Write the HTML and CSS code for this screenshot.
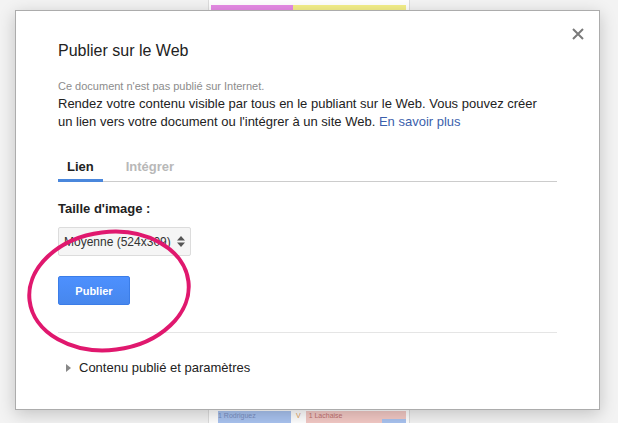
FILE: index.html
```html
<!DOCTYPE html>
<html lang="fr">
<head>
    <meta charset="UTF-8">
    <title>Publier sur le Web</title>
    <link rel="stylesheet" href="styles.css">
</head>
<body>
    <!-- Sheet visible behind the dialog -->
    <div class="page">
        <div class="sheet">
            <div class="sheet-top">
                <span class="band pink"></span>
                <span class="band yellow"></span>
            </div>
            <div class="sheet-bottom">
                <span class="cell blue">1 Rodriguez</span>
                <span class="cell mark">V</span>
                <span class="cell red">1 Lachaise <i class="chip"></i></span>
            </div>
        </div>
    </div>

    <div class="dialog">
        <svg class="close" width="12" height="12" viewBox="0 0 12 12">
            <path d="M1 1 L11 11 M11 1 L1 11" stroke="#7a7a7a" stroke-width="2" fill="none"/>
        </svg>

        <h1 class="title">Publier sur le Web</h1>
        <p class="note">Ce document n'est pas publié sur Internet.</p>
        <p class="intro">Rendez votre contenu visible par tous en le publiant sur le Web. Vous pouvez créer un lien vers votre document ou l'intégrer à un site Web. <a href="#">En savoir plus</a></p>

        <div class="tabs">
            <span class="tab active">Lien</span>
            <span class="tab">Intégrer</span>
        </div>

        <div class="label">Taille d'image :</div>
        <div class="select">
            <span>Moyenne (524x309)</span>
            <svg width="8" height="11" viewBox="0 0 8 11">
                <path d="M0 4.5 L4 0 L8 4.5 Z M0 6.5 L4 11 L8 6.5 Z" fill="#555"/>
            </svg>
        </div>

        <button class="publish">Publier</button>

        <hr class="sep">

        <div class="more">
            <svg width="5" height="8" viewBox="0 0 5 8"><path d="M0 0 L5 4 L0 8 Z" fill="#888"/></svg>
            <span>Contenu publié et paramètres</span>
        </div>

        <!-- hand drawn circle around the button -->
        <svg class="circle" width="175" height="134" viewBox="0 0 175 134">
            <ellipse cx="86" cy="67" rx="80" ry="59" transform="rotate(-7 86 67)" fill="none" stroke="#e0186e" stroke-width="4"/>
        </svg>
    </div>
</body>
</html>
```

FILE: styles.css
```css
body {
    margin: 0;
    background: #f3f3f3;
    font-family: "Liberation Sans", Arial, sans-serif;
    color: #222;
}

.page {
    height: 423px;
    display: flex;
}

.sheet {
    margin-left: 208px;
    width: 200px;
    border-left: 1px solid #ddd;
    border-right: 1px solid #ddd;
    background: #fff;
    display: flex;
    flex-direction: column;
    justify-content: space-between;
}

.sheet-top {
    display: flex;
    padding: 5px 3px 0 2px;
    height: 6px;
}

.band {
    height: 6px;
}

.pink {
    width: 82px;
    background: #e78be6;
}

.yellow {
    width: 113px;
    background: #f5f08a;
}

.sheet-bottom {
    display: flex;
    height: 12px;
    padding: 0 3px 0 2px;
    font-size: 7px;
    line-height: 10px;
    color: #7a8fc0;
}

.cell {
    height: 12px;
    overflow: hidden;
    white-space: nowrap;
}

.cell.blue {
    width: 75px;
    margin-left: 7px;
    background: #a9c3f0;
}

.cell.mark {
    width: 15px;
    text-align: center;
    color: #e0a060;
}

.cell.red {
    width: 100px;
    position: relative;
    background: #f3c9c5;
    color: #c07070;
    padding-left: 3px;
}

.chip {
    position: absolute;
    right: 0;
    top: 8px;
    width: 24px;
    height: 6px;
    background: #a9c3f0;
}

/* Dialog */
.dialog {
    position: absolute;
    left: 15px;
    top: 10px;
    width: 499px;
    height: 368px;
    padding: 30px 42px 0 42px;
    background: #fff;
    border: 1px solid #acacac;
    box-shadow: 0 4px 16px rgba(0, 0, 0, 0.2);
}

.close {
    position: absolute;
    left: 556px;
    top: 17px;
}

.title {
    margin: 0;
    font-size: 16px;
    font-weight: normal;
    line-height: 20px;
    color: #222;
}

.note {
    margin: 18px 0 0 0;
    font-size: 11px;
    line-height: 14px;
    color: #8c8c8c;
}

.intro {
    width: 488px;
    margin: 2px 0 0 0;
    font-size: 13px;
    line-height: 18px;
    color: #222;
}

.intro a {
    color: #3c5fac;
    text-decoration: none;
}

.tabs {
    display: flex;
    gap: 14px;
    margin-top: 28px;
    border-bottom: 1px solid #ccc;
}

.tab {
    padding: 0 9px 4px 9px;
    margin-bottom: -1px;
    font-size: 13px;
    font-weight: bold;
    line-height: 16px;
    color: #b8b8b8;
    border-bottom: 3px solid transparent;
}

.tab.active {
    color: #222;
    border-bottom-color: #4a87dc;
}

.label {
    margin-top: 19px;
    font-size: 13px;
    font-weight: bold;
    line-height: 16px;
}

.select {
    margin-top: 10px;
    width: 121px;
    height: 27px;
    padding: 0 5px 0 5px;
    display: flex;
    align-items: center;
    justify-content: space-between;
    background: #f5f5f5;
    border: 1px solid #dcdcdc;
    border-radius: 2px;
    font-size: 12px;
    color: #333;
}

.publish {
    display: block;
    margin-top: 20px;
    width: 72px;
    height: 29px;
    padding: 0;
    border: 1px solid #3b7de8;
    border-radius: 2px;
    background: linear-gradient(#4d90fe, #4787ed);
    color: #fff;
    font-family: "Liberation Sans", Arial, sans-serif;
    font-size: 11px;
    font-weight: bold;
}

.sep {
    margin: 27px 0 0 0;
    border: none;
    border-top: 1px solid #e5e5e5;
}

.more {
    margin-top: 27px;
    display: flex;
    align-items: center;
    gap: 8px;
    padding-left: 8px;
    font-size: 13px;
    line-height: 16px;
}

.circle {
    position: absolute;
    left: 7px;
    top: 213px;
}
```
